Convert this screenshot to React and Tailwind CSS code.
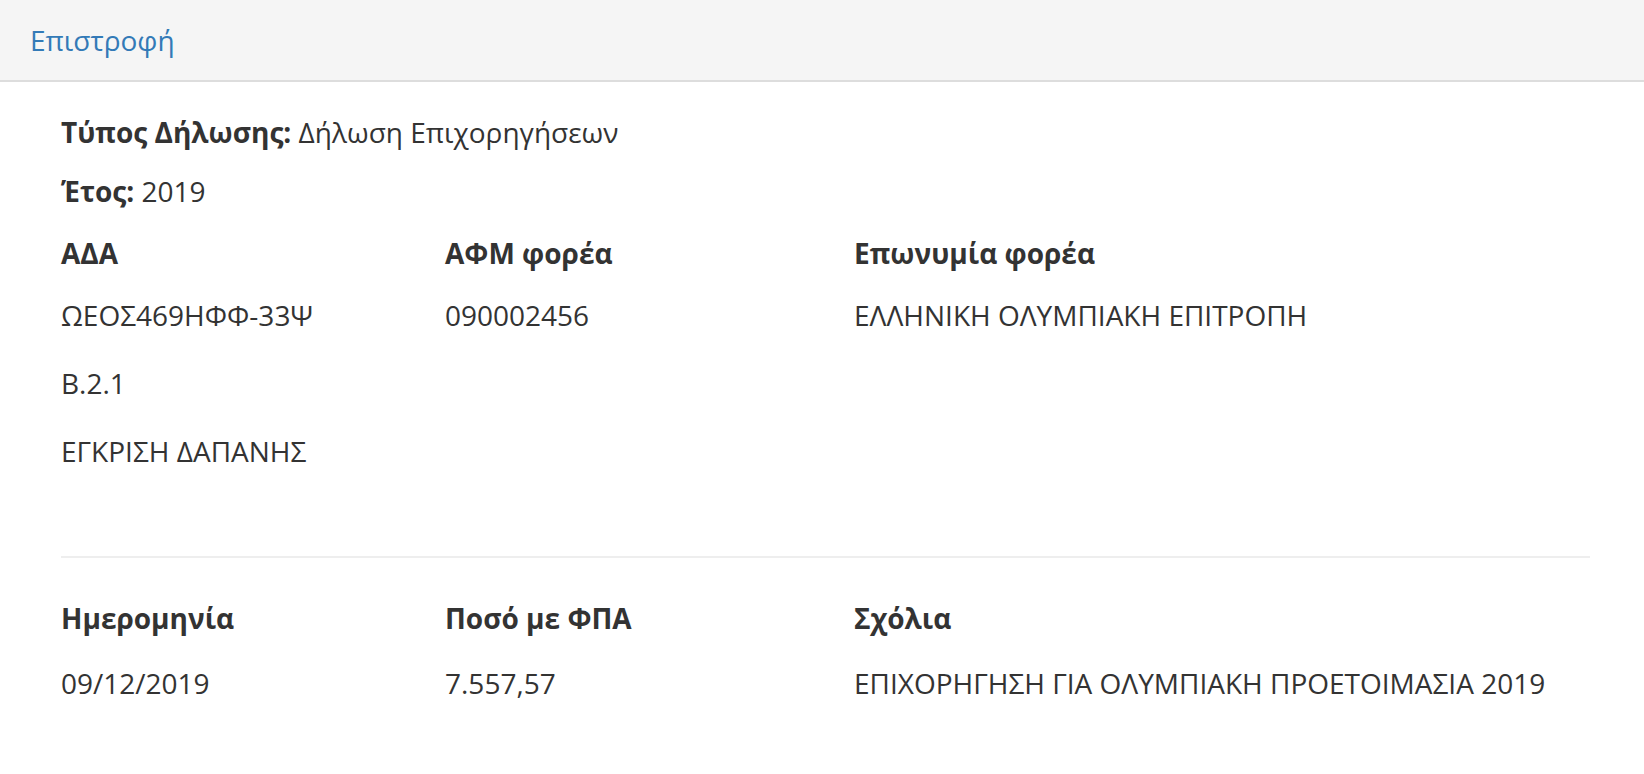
export default function App() {
  const font = { fontFamily: '"Open Sans", "Noto Sans", sans-serif' };
  return (
    <div className="w-[1644px] h-[774px] bg-white text-[#333] text-[28px] leading-[34px]" style={font}>
      <div className="h-[82px] bg-[#f5f5f5] border-b-2 border-[#dddddd] flex items-center pl-[30px]">
        <a className="text-[#337ab7] text-[28px]">Επιστροφή</a>
      </div>
      <div className="pl-[61px] pr-[54px] pt-[33px]">
        <div><span className="font-bold">Τύπος Δήλωσης:</span> Δήλωση Επιχορηγήσεων</div>
        <div className="mt-[25px]"><span className="font-bold">Έτος:</span> 2019</div>
        <div className="flex mt-[28px]">
          <div className="w-[384px]">
            <div className="font-bold">ΑΔΑ</div>
            <div className="mt-[28px]">ΩΕΟΣ469ΗΦΦ-33Ψ</div>
            <div className="mt-[34px]">Β.2.1</div>
            <div className="mt-[34px]">ΕΓΚΡΙΣΗ ΔΑΠΑΝΗΣ</div>
          </div>
          <div className="w-[409px]">
            <div className="font-bold">ΑΦΜ φορέα</div>
            <div className="mt-[28px]">090002456</div>
          </div>
          <div className="flex-1">
            <div className="font-bold">Επωνυμία φορέα</div>
            <div className="mt-[28px]">ΕΛΛΗΝΙΚΗ ΟΛΥΜΠΙΑΚΗ ΕΠΙΤΡΟΠΗ</div>
          </div>
        </div>
        <div className="mt-[88px] border-t-2 border-[#eeeeee]"></div>
        <div className="flex mt-[43px]">
          <div className="w-[384px]">
            <div className="font-bold">Ημερομηνία</div>
            <div className="mt-[31px]">09/12/2019</div>
          </div>
          <div className="w-[409px]">
            <div className="font-bold">Ποσό με ΦΠΑ</div>
            <div className="mt-[31px]">7.557,57</div>
          </div>
          <div className="flex-1">
            <div className="font-bold">Σχόλια</div>
            <div className="mt-[31px]">ΕΠΙΧΟΡΗΓΗΣΗ ΓΙΑ ΟΛΥΜΠΙΑΚΗ ΠΡΟΕΤΟΙΜΑΣΙΑ 2019</div>
          </div>
        </div>
      </div>
    </div>
  );
}
